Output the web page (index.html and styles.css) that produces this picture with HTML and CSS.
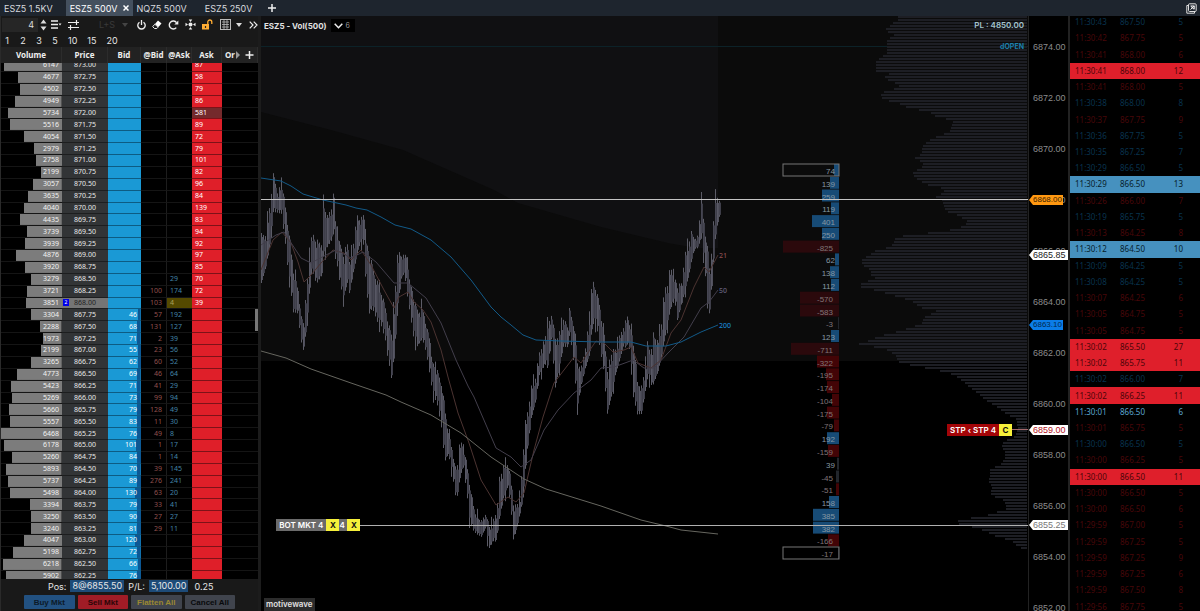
FILE: index.html
```html
<!DOCTYPE html>
<html lang="en">
<head>
    <meta charset="UTF-8">
    <meta name="viewport" content="width=device-width, initial-scale=1.0">
    <title>ESZ5 500V</title>
    <link rel="stylesheet" href="styles.css">
</head>
<body>
    <nav class="tabs">
        <a href="#" class="tab">ESZ5 1.5KV</a>
        <a href="#" class="tab active">ESZ5 500V
            <svg width="6" height="6" viewBox="0 0 6 6"><path d="M.5 .5l5 5M5.500 .5l-5 5" stroke="#fff" stroke-width="1.500"/></svg>
        </a>
        <a href="#" class="tab">NQZ5 500V</a>
        <a href="#" class="tab">ESZ5 250V</a>
        <button class="add-tab" aria-label="Add tab">
            <svg width="8" height="8" viewBox="0 0 8 8"><path d="M4 0v8M0 4h8" stroke="#eee" stroke-width="1.500"/></svg>
        </button>
        <button class="popout" aria-label="Pop out">
            <svg width="11" height="11" viewBox="0 0 11 11" fill="none" stroke="#ddd"><path d="M2 2.500H.8v7.700h7.700V9"/><rect x="2.500" y=".8" width="7.700" height="7.700" rx="1"/><path d="M4.500 3l3.800 3.500M8.300 3L4.500 6.500M5 3h3.200v3" stroke="#fff"/></svg>
        </button>
    </nav>

    <main class="workspace">
        <section class="dom">
            <div class="toolbar">
                <input class="qty" type="text" value="4" aria-label="Quantity">
                <span class="stepper">
                    <button aria-label="Increase"><svg width="7" height="5" viewBox="0 0 7 5"><path d="M3.500 .5l3 4h-6z" fill="#ddd"/></svg></button>
                    <button aria-label="Decrease"><svg width="7" height="5" viewBox="0 0 7 5"><path d="M3.500 4.500l3-4h-6z" fill="#ddd"/></svg></button>
                </span>
                <button aria-label="Order presets"><svg width="11" height="9" viewBox="0 0 11 9"><path d="M0 1h7M0 4.500h7M0 8h7" stroke="#eee" stroke-width="1.400"/><path d="M7.500 3.500h3L9 5.500z" fill="#eee"/></svg></button>
                <button aria-label="Settings"><svg width="11" height="10" viewBox="0 0 11 10" stroke="#eee" stroke-width="1.200"><path d="M0 2.500h11M0 7.500h11M8.500 0v5M2.500 5v5"/></svg></button>
                <select class="mode" aria-label="Position mode"><option>L+S</option></select>
                <svg width="6" height="4" viewBox="0 0 6 4"><path d="M0 0h6L3 4z" fill="#444"/></svg>
                <button class="first-tool" aria-label="Power"><svg width="9" height="10" viewBox="0 0 9 10" fill="none" stroke="#eee" stroke-width="1.300"><path d="M2.500 2.200a3.700 3.700 0 1 0 4 0M4.500 0v5"/></svg></button>
                <button aria-label="Clear"><svg width="10" height="9" viewBox="0 0 10 9"><path d="M6 .5l3.500 3-3 3.500-3.500-3z" fill="#fff"/><path d="M2.800 4.200l3.300 3-1.300 1.300H2.500L.7 6.700z" fill="none" stroke="#eee"/></svg></button>
                <button aria-label="Refresh"><svg width="11" height="10" viewBox="0 0 11 10"><path d="M8.300 7.600A4 4 0 1 1 8.500 2.600" fill="none" stroke="#eee" stroke-width="1.400"/><path d="M10.300 .4v4H6.300z" fill="#eee"/></svg></button>
                <button aria-label="Center price"><svg width="11" height="11" viewBox="0 0 11 11" fill="#eee"><circle cx="5.500" cy="5.500" r="2"/><path d="M5.500 3L3.700 .5h3.600zM5.500 8l-1.800 2.500h3.600zM3 5.500L.5 3.700v3.600zM8 5.500l2.500-1.800v3.600z"/></svg></button>
                <button aria-label="Unlock"><svg width="11" height="11" viewBox="0 0 11 11"><rect x="0" y="5" width="7" height="5.500" fill="#ffad33"/><path d="M5.800 5.500V3a2 2 0 0 1 4 0v2" fill="none" stroke="#ffad33" stroke-width="1.300"/><path d="M3.500 7v2" stroke="#222" stroke-width="1.200"/></svg></button>
                <button class="grid-tool" aria-label="Layout"><svg width="11" height="11" viewBox="0 0 11 11" fill="none" stroke="#bbb"><rect x=".5" y=".5" width="10" height="10"/><path d="M2 3h7M2 5.500h7M2 8h7M4 1v9M7 1v9" stroke-width=".8"/></svg>
                <svg width="6" height="4" viewBox="0 0 6 4"><path d="M0 0h6L3 4z" fill="#ddd"/></svg></button>
                <button class="more" aria-label="More"><svg width="9" height="8" viewBox="0 0 9 8"><path d="M.7 .7L4 4 .7 7.300M4.700 .7L8 4 4.700 7.300" fill="none" stroke="#eee" stroke-width="1.200"/></svg></button>
            </div>
            <div class="sizes">
                <button>1</button><button>2</button><button>3</button><button>5</button>
                <button>10</button><button>15</button><button>20</button>
            </div>
            <div class="ladder" id="ladder">
                <table>
                    <colgroup><col class="c-vol"><col class="c-price"><col class="c-bid"><col class="c-tb"><col class="c-ta"><col class="c-ask"><col></colgroup>
                    <thead>
                        <tr>
                            <th>Volume</th><th>Price</th><th>Bid</th><th>@Bid</th><th>@Ask</th><th>Ask</th>
                            <th class="last">Or<svg width="18" height="8" viewBox="0 0 18 8"><path d="M0 0l4 4-4 4z" fill="#999"/><path d="M13.500 0v8M9.500 4h8" stroke="#eee" stroke-width="1.500"/></svg></th>
                        </tr>
                    </thead>
                    <tbody id="ladderRows"></tbody>
                </table>
                <span class="thumb"></span>
            </div>
            <div class="position">
                <span>Pos:</span><b>8@6855.50</b><span>P/L:</span><b>5,100.00</b><span class="risk">0.25</span>
            </div>
            <div class="orders">
                <button class="buy">Buy Mkt</button>
                <button class="sell">Sell Mkt</button>
                <button class="flatten">Flatten All</button>
                <button class="cancel">Cancel All</button>
            </div>
        </section>

        <section class="chart">
            <div class="plot">
                <svg id="plot" class="canvas"></svg>
                <header class="title">
                    <h1>ESZ5 - Vol(500)</h1>
                    <button><svg width="9" height="6" viewBox="0 0 9 6"><path d="M.7 .7l3.800 4L8.300 .7" fill="none" stroke="#eee" stroke-width="1.500"/></svg>6</button>
                </header>
                <div class="order bot"><span>BOT MKT 4</span><button>X</button><span class="mini">4</span><button>X</button></div>
                <div class="order stop"><span>STP ‹ STP 4</span><button>C</button></div>
                <span class="brand">motivewave</span>
            </div>
            <div class="axis" id="axis">
                <span class="tag last">6868.00</span>
                <span class="tag avg">6865.85</span>
                <span class="tag ma">6863.10</span>
                <span class="tag stp">6859.00</span>
                <span class="tag entry">6855.25</span>
            </div>
        </section>

        <section class="tape">
            <table><tbody id="tapeRows"></tbody></table>
        </section>
    </main>
    <script src="script.js"></script>
</body>
</html>
```
FILE: styles.css
```css
* {
    box-sizing: border-box;
}
body {
    margin: 0;
    height: 100vh;
    display: flex;
    flex-direction: column;
    overflow: hidden;
    background: #000;
    color: #e6e6e6;
    font-family: Inter, "Noto Sans", sans-serif;
    font-size: 9px;
}
button {
    padding: 0;
    border: 0;
    background: none;
    color: inherit;
    font: inherit;
    display: flex;
    align-items: center;
    justify-content: center;
    cursor: pointer;
}
svg {
    display: block;
    flex: none;
}
table {
    width: 100%;
    table-layout: fixed;
    border-spacing: 0;
}
th, td {
    padding: 0;
}

/* tabs */
.tabs {
    display: flex;
    flex: none;
    height: 16px;
    background: #1e252e;
}
.tab {
    display: flex;
    align-items: center;
    gap: 5px;
    padding: 0 4px;
    margin-right: 9px;
    color: #d8dade;
    text-decoration: none;
    white-space: nowrap;
}
.tab.active {
    margin-right: 0;
    background: #44505e;
    color: #fff;
}
.tab.active + .tab {
    margin-right: 10px;
}
.add-tab {
    margin-left: 3px;
}
.popout {
    margin-left: auto;
    padding-right: 3px;
}
.workspace {
    flex: 1;
    min-height: 0;
    display: grid;
    grid-template-columns: 261px 1fr 132px;
}

/* order ladder */
.dom {
    display: flex;
    flex-direction: column;
    min-height: 0;
    background: #191919;
    border-left: 1px solid #2a2a2a;
    border-right: 3px solid #1c1c1c;
}
.toolbar {
    display: flex;
    align-items: center;
    gap: 6px;
    height: 17px;
    padding-left: 1px;
    flex: none;
}
.qty {
    width: 36px;
    height: 14px;
    padding: 0 4px;
    border: 0;
    background: #262626;
    color: #ddd;
    font: inherit;
    text-align: right;
}
.stepper {
    display: flex;
    flex-direction: column;
    gap: 2px;
    margin-left: -4px;
    margin-right: -2px;
}
.mode {
    appearance: none;
    width: 20px;
    margin-left: 14px;
    padding: 0;
    border: 0;
    background: none;
    color: #3a3a3a;
    font: inherit;
}
.first-tool {
    margin-left: 3px;
}
.grid-tool {
    gap: 5px;
    margin-left: 1px;
}
.more {
    margin-left: 1px;
}
.sizes {
    display: flex;
    gap: 10px;
    height: 14px;
    padding-left: 3px;
    flex: none;
}
.sizes button {
    min-width: 6px;
}
.ladder {
    flex: 1;
    min-height: 0;
    overflow: hidden;
    position: relative;
    background: #000;
    font: 7px/10px "Noto Sans", sans-serif;
}
.ladder table {
    height: calc(100% + 7px);
}
.c-vol { width: 61px; }
.c-price { width: 46px; }
.c-bid { width: 33px; }
.c-tb { width: 26px; }
.c-ta { width: 25px; }
.c-ask { width: 30px; }
.ladder th {
    position: sticky;
    top: 0;
    height: 16px;
    background: #222;
    border-right: 1px solid #2c2c2c;
    color: #eee;
    font-size: 8px;
    white-space: nowrap;
}
.ladder th.last svg {
    display: inline-block;
    margin-left: 1px;
    vertical-align: -1px;
}
.ladder td {
    border-top: 1px solid #151515;
}
.ladder .vol {
    padding-right: 3px;
    background: linear-gradient(#7c7c7c, #7c7c7c) right / var(--w) 100% no-repeat;
    color: #f2f2f2;
    text-align: right;
}
.ladder .price {
    background: #323436;
    border-color: #1d1e1f;
    padding-left: 12px;
    color: #e8e8e8;
}
.ladder .bid {
    padding-right: 4px;
    background: linear-gradient(#0b5794, #0b5794) right / var(--w) 100% no-repeat #1a99d5;
    border-color: #0d5c83;
    color: #fff;
    text-align: right;
}
.ladder .tb {
    padding-right: 4px;
    border-right: 1px solid #1d1d1d;
    color: #93504f;
    text-align: right;
}
.ladder .ta {
    padding-left: 3px;
    color: #4383a6;
}
.ladder .ask {
    padding-left: 3px;
    background: #df1f29;
    border-color: #7d1218;
    color: #fff;
}
.ladder .ask.big {
    background: #742a2c;
}
.ladder .current .price {
    background: #757575;
    color: #222;
    padding-left: 1px;
}
.ladder .current i {
    display: inline-block;
    width: 6px;
    height: 7px;
    margin-right: 5px;
    background: #0000e8;
    color: #fff;
    font: 5px/7px "Noto Sans", sans-serif;
    text-align: center;
    vertical-align: top;
    margin-top: 1px;
}
.ladder .current .ta {
    background: #544900;
    color: #aaa05c;
}
.thumb {
    position: absolute;
    right: 0;
    top: 50%;
    width: 3px;
    height: 22px;
    background: #777;
}
.position {
    display: flex;
    align-items: center;
    gap: 4px;
    height: 14px;
    padding-left: 47px;
    flex: none;
}
.position b {
    padding: 0 2px;
    background: #1d4b78;
    font-weight: normal;
    line-height: 12px;
}
.position .risk {
    margin-left: 2px;
}
.orders {
    display: flex;
    gap: 3px;
    height: 18px;
    padding: 2px 23px 2px 23px;
    flex: none;
}
.orders button {
    flex: 1;
    border-radius: 1px;
    background: #40444d;
    color: #08090b;
    font: bold 8px "Liberation Sans", sans-serif;
}
.orders .buy {
    background: #225181;
    color: #0c1a29;
}
.orders .sell {
    background: #a01c26;
    color: #2c0508;
}
.orders .flatten {
    color: #9a8832;
}

/* chart */
.chart {
    display: grid;
    grid-template-columns: 1fr 40px;
    min-width: 0;
    min-height: 0;
}
.plot {
    position: relative;
    min-width: 0;
    overflow: hidden;
}
.canvas {
    position: absolute;
    width: 100%;
    height: 100%;
}
.canvas text {
    font-size: 8px;
}
.canvas .ma-label {
    font: 500 7px "Noto Sans", sans-serif;
}
.canvas .open-label {
    font-size: 7px;
    font-weight: 700;
}
.title {
    position: relative;
    display: flex;
    align-items: center;
    gap: 4px;
    padding: 3px 3px;
}
.title h1 {
    margin: 0;
    font-size: 8px;
    color: #e2e2e2;
}
.title button {
    gap: 3px;
    height: 13px;
    padding: 0 5px 0 3px;
    background: #000;
    color: #999;
    font-size: 7px;
}
.order {
    position: absolute;
    display: flex;
    height: 12px;
    color: #fff;
    font-size: 8px;
    line-height: 12px;
    font-weight: 600;
}
.order span {
    padding: 0 3px;
    background: #6b6b6b;
}
.order .mini {
    padding: 0;
    width: 8px;
}
.order button {
    width: 13px;
    background: #f6f03a;
    color: #111;
    font-weight: 700;
}
.bot {
    left: 2%;
    top: 84.6%;
}
.stop {
    right: 16px;
    top: 68.6%;
}
.stop span {
    background: #a30508;
}
.brand {
    position: absolute;
    left: 3px;
    bottom: 0;
    padding: 0 2px;
    background: #2c2c2c;
    color: #e2e2e2;
    font-size: 8px;
    font-weight: 600;
    line-height: 13px;
}
.axis {
    position: relative;
    display: flex;
    flex-direction: column;
    justify-content: space-between;
    padding: 25px 0 0 4px;
    margin-bottom: -3px;
    border-left: 1px solid #222;
    color: #8c8c8c;
    font: 9px/12px "Liberation Sans", sans-serif;
}
.tag {
    position: absolute;
    left: 0;
    height: 10px;
    padding-left: 4px;
    width: 39px;
    background: #fff;
    color: #222;
    line-height: 11px;
    clip-path: polygon(0 50%, 4px 0, 100% 0, 100% 100%, 4px 100%);
}
.tag.last, .tag.ma {
    width: 34px;
    font-size: 8px;
    line-height: 10px;
}
.tag.last {
    background: #ff9811;
    color: #3b2200;
}
.tag.ma {
    background: #0b7de8;
    color: #02294f;
}
.tag.stp {
    color: #b3121c;
}
.tag.entry {
    color: #777;
}

/* time and sales */
.tape {
    overflow: hidden;
    min-height: 0;
    border-left: 2px solid #222;
    font: 8px/12px "Noto Sans", sans-serif;
}
.tape table {
    height: calc(100% + 6px);
    margin-top: -2px;
}
.tape td:nth-child(1) {
    width: 50px;
    padding-left: 5px;
}
.tape td:nth-child(3) {
    padding-right: 17px;
    text-align: right;
}
.tape .down { color: #480709; }
.tape .up { color: #08334e; }
.tape .lit { color: #5aa5cf; }
.tape .sold {
    background: #df1f2b;
    color: #4c0509;
}
.tape .bought {
    background: #4691bf;
    color: #071d2b;
}
```
FILE: script.js
```js
// ---- ladder ----
const volumes = [6147, 4677, 4502, 4949, 5734, 5516, 4054, 2979, 2758, 2199, 3057, 3635, 4040, 4435, 3739, 3939, 4876, 3920, 3279, 3721, 3851, 3304, 2288, 1973, 2199, 3265, 4773, 5423, 5269, 5660, 5557, 6468, 6178, 5260, 5893, 5737, 5498, 3394, 3250, 3240, 4047, 5198, 6218, 5902];
const asks = [87, 58, 79, 86, 581, 89, 72, 79, 101, 82, 96, 84, 139, 83, 94, 92, 97, 85, 70, 72, 39];
const bids = [46, 68, 71, 55, 62, 69, 71, 73, 79, 83, 76, 101, 84, 70, 89, 130, 79, 90, 81, 120, 72, 66, 76];
const tradedBid = [100, 103, 57, 131, 2, 23, 60, 46, 41, 99, 128, 11, 49, 1, 1, 39, 276, 63, 33, 27, 29];
const tradedAsk = [29, 174, 4, 192, 127, 39, 56, 52, 64, 29, 94, 49, 30, 8, 17, 14, 145, 241, 20, 41, 27, 11];
const maxVolume = Math.max(...volumes);

document.getElementById('ladderRows').innerHTML = volumes.map((v, i) => {
    const bid = bids[i - 21] || '';
    const ask = asks[i] || '';
    const now = i === 20;
    return `<tr${now ? ' class="current"' : ''}>
        <td class="vol" style="--w:${(v / maxVolume * 100).toFixed(1)}%">${v}</td>
        <td class="price">${now ? '<i>2</i>' : ''}${(873 - i * 0.25).toFixed(2)}</td>
        <td class="bid" style="--w:${bid ? Math.round(bid / 8 + 2) : 0}%">${bid}</td>
        <td class="tb">${tradedBid[i - 19] || ''}</td>
        <td class="ta">${tradedAsk[i - 18] || ''}</td>
        <td class="ask${ask > 500 ? ' big' : ''}">${ask}</td>
        <td></td>
    </tr>`;
}).join('');
document.getElementById('ladder').scrollTop = 4;

// ---- time and sales: time, price, size, style ----
const tape = `30:43 867.50 5 up|30:42 867.75 5 down|30:41 868.00 6 down|30:41 868.00 12 sold|30:41 868.00 5 down
30:38 868.00 8 up|30:37 867.75 9 down|30:36 867.75 5 up|30:35 867.25 7 up|30:29 866.50 5 up
30:29 866.50 13 bought|30:26 866.00 7 down|30:19 865.75 5 up|30:13 864.25 8 down|30:12 864.50 10 bought
30:09 864.25 5 up|30:08 864.25 5 up|30:07 864.25 6 down|30:05 864.75 5 down|30:05 864.75 5 down
30:02 865.50 27 sold|30:02 865.75 11 sold|30:02 866.00 7 up|30:02 866.25 11 sold|30:01 866.50 6 lit
30:01 865.75 5 down|30:00 866.50 5 up|30:00 866.25 5 down|30:00 866.50 11 sold|30:00 866.50 5 down
30:00 866.50 6 down|29:59 867.00 5 down|29:59 867.25 5 down|29:59 867.25 9 down|29:59 867.25 6 down
29:59 867.50 8 down|29:56 867.75 5 down`;
document.getElementById('tapeRows').innerHTML = tape.split(/[|\n]/).map(line => {
    const [time, price, size, cls] = line.split(' ');
    return `<tr class="${cls}"><td>11:${time}</td><td>${price}</td><td>${size}</td></tr>`;
}).join('');

// ---- chart ----
// each bar cluster: x, high, low
const swings = [[0,233,283],[4,232,270],[8,205,250],[12,172,215],[16,190,215],[20,182,218],[24,205,250],[28,235,280],[32,268,314],[36,285,315],[40,315,345],[42,320,353],[45,290,335],[48,250,300],[51,230,270],[55,238,285],[60,240,278],[62,200,260],[66,215,250],[70,205,245],[72,193,240],[74,218,265],[78,240,280],[82,250,300],[86,240,285],[88,262,295],[92,240,275],[96,212,260],[99,218,245],[102,212,250],[105,240,290],[108,250,315],[111,265,310],[116,280,325],[120,290,330],[124,305,345],[127,320,370],[130,330,378],[133,300,355],[136,248,310],[140,255,280],[143,250,275],[146,262,300],[149,280,320],[153,300,350],[157,310,345],[161,305,340],[165,325,355],[168,335,375],[171,360,395],[176,370,410],[180,380,435],[184,410,461],[187,432,455],[190,445,470],[193,460,490],[195,470,505],[199,436,480],[202,450,470],[205,460,495],[208,480,520],[211,500,530],[215,515,535],[220,520,538],[224,513,530],[228,525,551],[232,518,545],[235,510,540],[238,475,520],[242,465,500],[246,462,490],[249,475,505],[252,500,544],[255,505,535],[258,495,520],[261,465,500],[263,425,480],[266,410,450],[270,385,420],[274,375,405],[278,350,378],[282,340,372],[286,325,368],[290,313,340],[294,335,390],[298,330,370],[302,315,350],[306,325,350],[308,308,340],[312,322,360],[316,360,408],[320,365,385],[324,345,370],[328,315,360],[331,276,330],[334,285,330],[338,302,345],[342,330,370],[346,365,416],[350,350,400],[354,348,378],[358,335,365],[362,325,350],[366,314,345],[369,325,352],[372,340,400],[376,380,417],[380,385,417],[383,370,400],[386,340,385],[389,350,385],[392,330,385],[396,340,375],[400,320,360],[403,285,345],[406,280,330],[409,263,315],[413,275,305],[416,285,320],[420,282,305],[423,255,295],[427,240,280],[430,230,265],[433,238,250],[436,235,250],[440,200,245],[443,225,260],[446,245,310],[448,265,315],[451,240,280],[453,200,250],[455,186,235],[457,200,222],[459,200,215]];
const ma200 = [[0,178],[20,181],[30,186],[42,194],[62,200],[85,205],[95,208],[106,210],[120,217],[134,225],[150,229],[170,240],[190,257],[210,280],[230,307],[240,317],[250,325],[262,335],[275,340],[300,341],[340,342],[370,342],[385,346],[405,346],[420,342],[440,332],[457,325]];
const vwap = [[0,351],[25,358],[50,369],[90,383],[125,395],[140,402],[170,415],[200,433],[230,457],[263,479],[285,489],[340,506],[380,520],[405,526],[420,530],[457,534]];
const ma21 = [[0,270],[12,240],[21,232],[30,243],[37,262],[43,282],[50,275],[60,263],[72,250],[83,253],[90,260],[100,250],[110,265],[123,290],[133,308],[138,297],[147,292],[153,302],[162,310],[170,322],[180,350],[187,377],[197,413],[208,443],[220,480],[235,505],[247,497],[255,502],[263,493],[273,450],[282,417],[293,383],[313,357],[320,363],[335,341],[343,343],[352,352],[363,350],[370,347],[377,363],[390,368],[400,360],[410,333],[420,320],[433,287],[443,267],[448,272],[457,255]];
const ma50 = [[0,245],[15,235],[23,232],[40,258],[50,263],[65,255],[75,250],[90,258],[102,252],[115,262],[133,283],[147,283],[165,298],[180,323],[195,360],[207,386],[213,397],[235,448],[250,457],[260,467],[270,460],[283,430],[297,410],[313,393],[330,380],[340,368],[353,367],[372,360],[383,368],[393,368],[407,353],[423,337],[440,308],[448,302],[457,290]];
const cloud = [[0,112],[70,130],[142,150],[233,190],[257,203],[340,227],[407,243],[435,248],[457,248]];
// volume profile: y, left edge
const profile = [[16,898],[20,898],[22,893],[25,890],[28,886],[31,888],[33,895],[36,891],[40,887],[52,887],[56,881],[61,876],[70,876],[72,890],[76,885],[80,889],[84,900],[88,894],[92,881],[98,882],[103,900],[107,908],[111,930],[115,935],[120,953],[130,950],[134,942],[137,933],[140,928],[145,923],[150,922],[155,920],[158,913],[161,924],[166,922],[171,913],[176,914],[180,920],[184,928],[188,945],[192,942],[196,936],[198,942],[210,945],[214,957],[220,967],[224,965],[228,957],[232,928],[236,895],[240,895],[246,890],[250,875],[254,870],[258,862],[262,862],[266,865],[270,872],[273,870],[277,875],[283,861],[286,861],[290,878],[294,892],[298,905],[302,915],[306,918],[311,940],[314,927],[318,923],[323,922],[326,911],[330,900],[333,887],[337,875],[340,868],[342,855],[344,862],[348,885],[354,896],[358,897],[362,900],[366,920],[370,940],[374,955],[380,962],[388,972],[396,982],[402,990],[408,1000],[414,1008],[418,1016],[428,1018],[436,1014],[440,1005],[444,1001],[452,1005],[458,1005],[464,1000],[468,990],[482,989],[486,992],[492,990],[496,995],[500,1005],[508,1006],[510,1000],[514,988],[519,960],[522,954],[526,972],[530,985],[535,995],[540,1012],[544,1016],[548,1022]];
// delta per price: value, bar width
const deltas = [[74,5],[139,9],[259,17],[119,8],[401,27],[250,17],[-825,56],[62,4],[138,9],[112,8],[-570,39],[-583,39],[-3,1],[123,8],[-711,48],[-322,22],[-195,13],[-174,12],[-104,7],[-175,12],[-79,5],[192,12],[-159,11],[39,2],[-45,3],[-51,3],[158,10],[385,26],[382,26],[-166,11],[-17,1]];

function valueAt(points, x, col) {
    for (let i = 1; i < points.length; i++) {
        if (x <= points[i][0]) {
            const a = points[i - 1], b = points[i];
            return a[col] + (b[col] - a[col]) * (x - a[0]) / (b[0] - a[0]);
        }
    }
    return points[points.length - 1][col];
}

function drawChart() {
    const svg = document.getElementById('plot');
    const w = svg.clientWidth, h = svg.clientHeight;
    const X = x => x * w / 767;
    const Y = y => (y - 16) * h / 595;
    const rect = (x, y, x2, y2, fill, extra = '') => `<rect x="${X(x).toFixed(1)}" y="${Y(y).toFixed(1)}" width="${X(x2 - x).toFixed(1)}" height="${(Y(y2) - Y(y)).toFixed(1)}" fill="${fill}" ${extra}/>`;
    const points = list => list.map(p => X(p[0]).toFixed(1) + ',' + Y(p[1]).toFixed(1)).join(' ');
    const line = (list, color) => `<polyline points="${points(list)}" fill="none" stroke="${color}"/>`;
    const label = (x, y, text, color, extra = '') => `<text x="${X(x).toFixed(1)}" y="${Y(y).toFixed(1)}" fill="${color}" ${extra}>${text}</text>`;
    let out = rect(0, 16, 767, 361, '#0b0b0b');
    out += `<polygon points="${points([[0, 16], ...cloud, [457, 16]])}" fill="#101012"/>`;
    out += rect(0, 46, 767, 47, '#0c2228');

    for (let y = 16; y < 549; y += 3) {
        out += rect(Math.round(valueAt(profile, y, 1)) - 261, y, 766, y + 2, '#1d1e24');
    }

    // wick, then a wider body; every few bars the wick runs past the cluster
    for (let x = 0, n = 0; x < 459; x += 2, n++) {
        const top = valueAt(swings, x, 1), low = valueAt(swings, x, 2), r = low - top;
        const a = (n * 37 % 11) / 11, b = (n * 53 % 13) / 13;
        const up = n % 7 === 3 ? 8 : 0, down = n % 9 === 5 ? 8 : 0;
        out += rect(x, top + r * a * 0.15 - up, x + 1, low - r * b * 0.15 + down, '#5c5c67');
        out += rect(x, top + r * (0.08 + a * 0.22), x + 2, low - r * (0.06 + b * 0.22), n % 3 ? '#444450' : '#585865', 'opacity=".9"');
    }

    out += line(ma21, '#4b3331') + line(ma50, '#423e4b') + line(vwap, '#66665f') + line(ma200, '#125a88');
    out += label(458, 258, '21', '#8e4d50', 'class="ma-label"') + label(458, 293, '50', '#65617c', 'class="ma-label"') + label(458, 328, '200', '#1a84cf', 'class="ma-label"');

    deltas.forEach(([value, width], i) => {
        const y = 164 + i * 12.77;
        const color = value > 0 ? '#174b76' : (y < 350 ? '#2b090c' : '#430406');
        out += rect(578 - width, y, 578, y + 12, Math.abs(value) < 50 ? '#22262c' : color);
        out += label(value > 0 ? 574 : 572, y + 10, value, value > 0 ? '#8798a3' : '#807578', 'text-anchor="end" font-family="Liberation Sans"');
    });
    out += rect(522, 164, 578, 176, 'none', 'stroke="#777"') + rect(522, 547, 578, 559, 'none', 'stroke="#777"');

    out += rect(0, 199, 767, 200, '#c4c4c4') + rect(15, 525, 767, 526, '#b0b0b0') + rect(750, 429, 767, 430, '#a56a6c');
    out += label(763, 28, 'PL : 4850.00', '#a4c4cf', 'text-anchor="end" font-weight="600"');
    out += label(763, 49, 'dOPEN', '#1a80ad', 'text-anchor="end" class="open-label"');
    svg.innerHTML = out;
}

// ---- price axis ----
const axis = document.getElementById('axis');
const tags = [...axis.querySelectorAll('.tag')];
for (let price = 6874; price >= 6852; price -= 2) {
    const tick = document.createElement('span');
    tick.textContent = price.toFixed(2);
    axis.insertBefore(tick, tags[0]);
}
function placeTags() {
    const height = axis.clientHeight;
    tags.forEach(tag => {
        const y = 31 + (6874 - parseFloat(tag.textContent)) / 22 * (height - 37);
        tag.style.top = Math.round(y - 5) + 'px';
    });
}

drawChart();
placeTags();
window.addEventListener('resize', () => {
    drawChart();
    placeTags();
});
```
